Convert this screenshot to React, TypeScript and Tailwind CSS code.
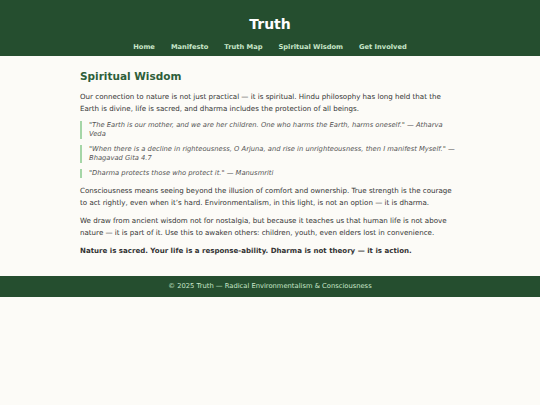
import React from 'react';

const navItems = ['Home', 'Manifesto', 'Truth Map', 'Spiritual Wisdom', 'Get Involved'];

const quotes = [
    '"The Earth is our mother, and we are her children. One who harms the Earth, harms oneself." — Atharva Veda',
    '"When there is a decline in righteousness, O Arjuna, and rise in unrighteousness, then I manifest Myself." — Bhagavad Gita 4.7',
    '"Dharma protects those who protect it." — Manusmriti',
];

export default function App() {
    return (
        <div className="min-h-screen bg-[#fcfbf7] font-['DejaVu_Sans',sans-serif] text-[#333]">
            {/* Header */}
            <header className="bg-[#254e2f] pt-[15px] pb-[3px] text-center">
                <h1 className="text-[14px] leading-[18px] font-bold text-white">Truth</h1>
                <nav className="mt-[9px] flex justify-center gap-[16px]">
                    {navItems.map((item) => (
                        <a key={item} href="#" className="text-[6.7px] leading-[11px] font-bold text-[#c8e6c9]">
                            {item}
                        </a>
                    ))}
                </nav>
            </header>

            {/* Main content */}
            <main className="mx-auto max-w-[380px] pt-[13px] pb-[19px]">
                <h2 className="text-[10.5px] leading-[14px] font-bold text-[#2e5e3a]">Spiritual Wisdom</h2>
                <p className="mt-[8px] max-w-[370px] text-[7.1px] leading-[11.5px]">
                    Our connection to nature is not just practical — it is spiritual. Hindu philosophy has long held that the Earth is divine, life is sacred, and dharma includes the protection of all beings.
                </p>
                <div className="mt-[7px] flex flex-col gap-[6px]">
                    {quotes.map((q) => (
                        <blockquote key={q} className="border-l-2 border-[#a5d6a7] pl-[7px] text-[6.75px] leading-[9px] italic text-[#555]">
                            {q}
                        </blockquote>
                    ))}
                </div>
                <p className="mt-[7px] text-[7.1px] leading-[11.5px]">
                    Consciousness means seeing beyond the illusion of comfort and ownership. True strength is the courage to act rightly, even when it’s hard. Environmentalism, in this light, is not an option — it is dharma.
                </p>
                <p className="mt-[7px] text-[7.1px] leading-[11.5px]">
                    We draw from ancient wisdom not for nostalgia, but because it teaches us that human life is not above nature — it is part of it. Use this to awaken others: children, youth, even elders lost in convenience.
                </p>
                <p className="mt-[7px] text-[7.05px] leading-[11.5px] font-bold">
                    Nature is sacred. Your life is a response-ability. Dharma is not theory — it is action.
                </p>
            </main>

            {/* Footer */}
            <footer className="bg-[#254e2f] py-[5px] text-center text-[6.75px] leading-[11px] text-[#c8e6c9]">
                © 2025 Truth — Radical Environmentalism &amp; Consciousness
            </footer>
        </div>
    );
}
